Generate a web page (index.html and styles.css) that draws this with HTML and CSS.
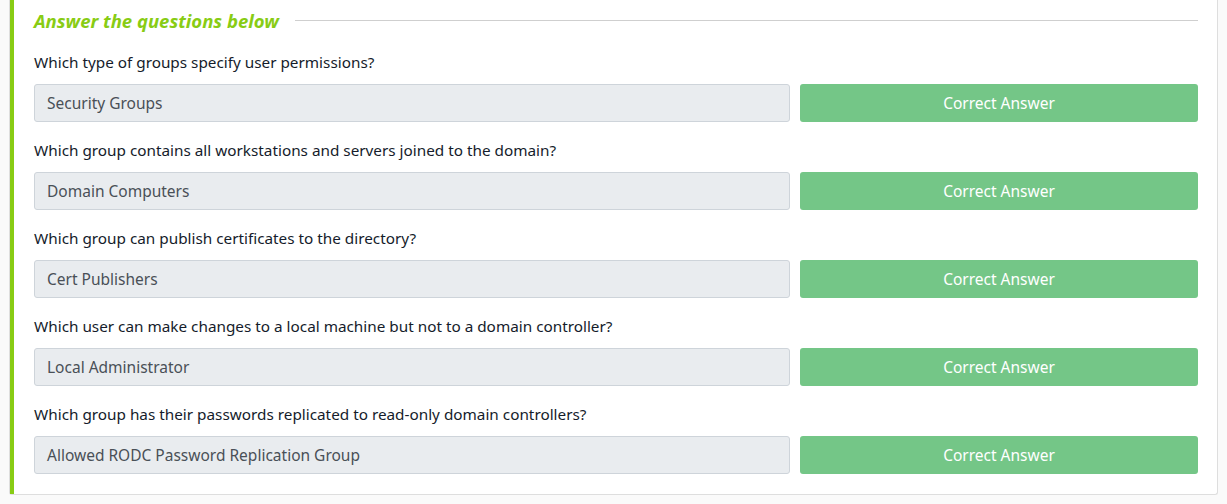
FILE: index.html
```html
<!DOCTYPE html>
<html>
<head>
<meta charset="utf-8">
<link rel="stylesheet" href="styles.css">
</head>
<body>
<div class="card">
  <div class="card-inner">
    <div class="heading-row">
      <h3 class="heading">Answer the questions below</h3>
      <div class="rule"></div>
    </div>
    <div class="question">
      <div class="label">Which type of groups specify user permissions?</div>
      <div class="answer-row">
        <div class="answer">Security Groups</div>
        <button class="btn">Correct Answer</button>
      </div>
    </div>
    <div class="question">
      <div class="label">Which group contains all workstations and servers joined to the domain?</div>
      <div class="answer-row">
        <div class="answer">Domain Computers</div>
        <button class="btn">Correct Answer</button>
      </div>
    </div>
    <div class="question">
      <div class="label">Which group can publish certificates to the directory?</div>
      <div class="answer-row">
        <div class="answer">Cert Publishers</div>
        <button class="btn">Correct Answer</button>
      </div>
    </div>
    <div class="question">
      <div class="label">Which user can make changes to a local machine but not to a domain controller?</div>
      <div class="answer-row">
        <div class="answer">Local Administrator</div>
        <button class="btn">Correct Answer</button>
      </div>
    </div>
    <div class="question">
      <div class="label">Which group has their passwords replicated to read-only domain controllers?</div>
      <div class="answer-row">
        <div class="answer">Allowed RODC Password Replication Group</div>
        <button class="btn">Correct Answer</button>
      </div>
    </div>
  </div>
</div>
</body>
</html>
```
FILE: styles.css
```css
html, body {
  margin: 0;
  padding: 0;
  background: #fafafa;
}
body {
  font-family: "Noto Sans", "Open Sans", sans-serif;
  color: #151c2b;
  padding: 0 9px;
}
.card {
  background: #fff;
  border: 1px solid #dedede;
  border-top: none;
  border-radius: 0 0 3px 3px;
}
.card-inner {
  border-left: 4px solid #88cc14;
  padding: 8px 19px 20px 20px;
}
.heading-row {
  display: flex;
  align-items: center;
  gap: 16px;
  height: 24px;
}
.heading {
  margin: 0;
  font-size: 18.5px;
  font-weight: 700;
  font-style: italic;
  color: #88cc14;
  white-space: nowrap;
}
.rule {
  flex: 1;
  height: 1px;
  background: #cfcfcf;
}
.question {
  margin-top: 19px;
}
.question + .question {
  margin-top: 17px;
}
.label {
  font-size: 15.3px;
  line-height: 22px;
  margin-bottom: 11px;
}
.answer-row {
  display: flex;
  gap: 10px;
}
.answer {
  flex: 1;
  height: 38px;
  box-sizing: border-box;
  background: #e9ecef;
  border: 1px solid #ced4da;
  border-radius: 3px;
  padding: 0 12px;
  display: flex;
  align-items: center;
  font-size: 15.5px;
  color: #495057;
}
.btn {
  width: 398px;
  height: 38px;
  border: none;
  border-radius: 3px;
  background: #74c687;
  color: #fff;
  font-family: inherit;
  font-size: 15.5px;
}
```
